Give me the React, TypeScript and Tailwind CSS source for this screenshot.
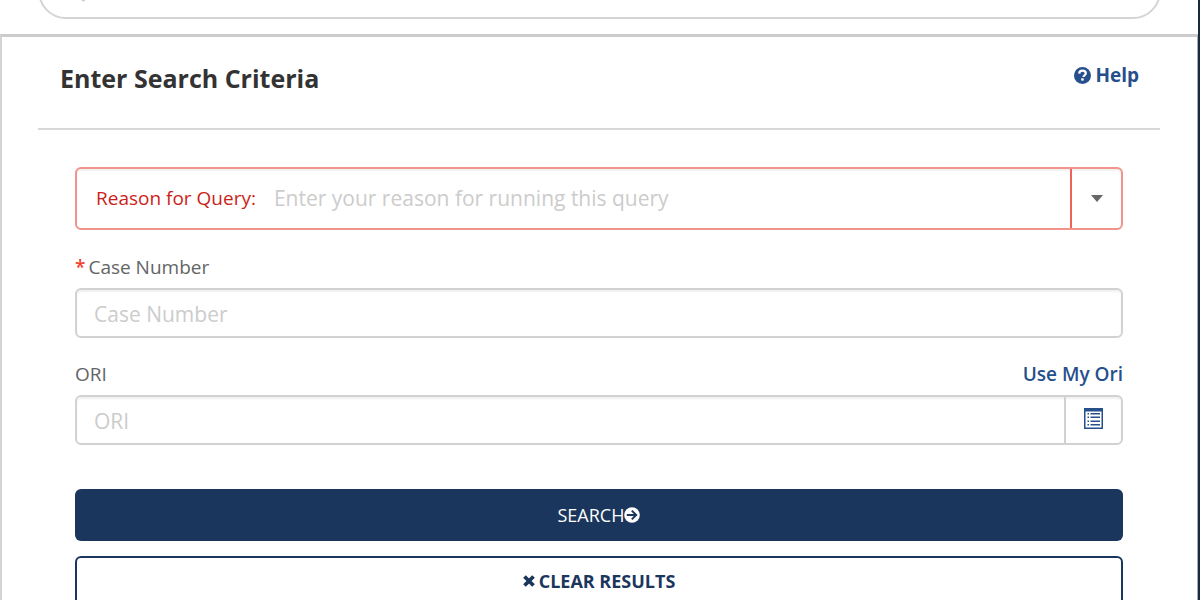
import React from 'react';

function SearchIcon() {
  return (
    <svg viewBox="0 0 20 20" className="size-[26px]" fill="none" stroke="#cccccc" strokeWidth="3" strokeLinecap="round" aria-hidden="true">
      <circle cx="8" cy="8" r="6" />
      <path d="M12.5 12.5 18 18" />
    </svg>
  );
}

function HelpIcon() {
  return (
    <svg viewBox="0 0 17 17" className="size-[17px]" aria-hidden="true">
      <circle cx="8.5" cy="8.5" r="8.5" fill="#26508b" />
      <path d="M5.2 6.6C5.3 4.6 6.600 3.600 8.500 3.600c2 0 3.300 1 3.300 2.600 0 2-2.300 2.100-2.300 3.900" fill="none" stroke="#fff" strokeWidth="2.200" />
      <rect x="7.200" y="11.300" width="2.500" height="2.300" fill="#fff" />
    </svg>
  );
}

function ListIcon() {
  return (
    <svg viewBox="0 0 19 21" className="h-[21px] w-[19px]" fill="#26508b" aria-hidden="true">
      <path fillRule="evenodd" d="M0 0H19V21H0ZM1.500 3.500V19.500H17.500V3.500Z" />
      <path d="M3.500 5h1.500v1.500H3.500zM3.500 8.500h1.500v1.500H3.500zM3.500 12.500h1.500v1.500H3.500zM3.500 16h1.500v1.500H3.500zM6.500 5H16v1.500H6.500zM6.500 8.500H16v1.500H6.500zM6.500 12.500H16v1.500H6.500zM6.500 16H16v1.500H6.500z" />
    </svg>
  );
}

function ArrowCircleIcon() {
  return (
    <svg viewBox="0 0 16 16" className="size-4" aria-hidden="true">
      <circle cx="8" cy="8" r="7.800" fill="#fff" />
      <path d="M2.800 8H12M7.800 3.600 12.200 8l-4.400 4.400" fill="none" stroke="#1b365d" strokeWidth="2" />
    </svg>
  );
}

function CrossIcon() {
  return (
    <svg viewBox="0 0 12 12" className="size-3" aria-hidden="true">
      <path d="M1.500 1.500 10.500 10.500M10.500 1.500 1.500 10.500" stroke="#1b365d" strokeWidth="3.800" />
    </svg>
  );
}

const inputClass =
  'h-[46px] w-full min-w-0 px-[17px] pt-0.5 text-[21px] text-[#333333] outline-none placeholder:text-[#cccccc]';

export default function App() {
  return (
    <div className="flex h-screen overflow-hidden bg-white font-['Open_Sans','Noto_Sans',sans-serif] text-[#636466]">
      <div className="flex min-w-0 flex-1 flex-col">
        <header className="flex h-[34px] shrink-0 items-end overflow-hidden pr-[37px] pb-[15px] pl-[38px]">
          <div className="flex h-[60px] flex-1 shrink-0 items-center rounded-[28px] border-2 border-[#d4d4d4] pl-5">
            <SearchIcon />
            <input type="search" aria-label="Search" className="ml-2 min-w-0 flex-1 outline-none" />
          </div>
        </header>

        <main className="flex-1 border-t-3 border-r border-l-2 border-t-[#cccccc] border-r-[#a9adb2] border-l-[#d4d4d4] pr-[37px] pl-9">
          <div className="flex h-[93px] items-start justify-between border-b-2 border-[#d8d8d8] pr-[21px] pl-[22px]">
            <h1 className="pt-[23px] text-[25px] leading-9 font-bold text-[#333333]">Enter Search Criteria</h1>
            <a href="#help" className="flex items-center gap-1 pt-6 text-[19px] leading-7 font-bold text-[#26508b]">
              <HelpIcon />
              Help
            </a>
          </div>

          <form className="px-[37px] pt-[37px]" onSubmit={(event) => event.preventDefault()}>
            <div className="flex h-[63px] rounded-md border-2 border-[#f0948c] shadow-[inset_0_2px_2px_rgba(0,0,0,0.06)]">
              <label htmlFor="reason" className="flex shrink-0 items-center pl-[19px] text-[19px] text-[#cb1f1b]">
                Reason for Query:
              </label>
              <input
                id="reason"
                type="text"
                placeholder="Enter your reason for running this query"
                className="min-w-0 flex-1 px-[18px] text-[21px] text-[#333333] outline-none placeholder:text-[#cccccc]"
              />
              <button type="button" aria-label="Show reasons" className="flex w-[51px] items-center justify-center border-l-2 border-[#f06257]">
                <svg viewBox="0 0 12 7" className="h-[7px] w-3" aria-hidden="true">
                  <path d="M0 0h12L6 7z" fill="#666666" />
                </svg>
              </button>
            </div>

            <label htmlFor="case-number" className="mt-6 mb-[7px] flex h-[27px] items-center text-[19px]">
              <span className="mr-[3px] font-semibold text-[#f33f2e]">*</span>Case Number
            </label>
            <div className="flex h-[50px] items-center rounded-md border-2 border-[#d2d2d2] shadow-[inset_0_2px_2px_rgba(0,0,0,0.06)]">
              <input id="case-number" type="text" placeholder="Case Number" className={inputClass} />
            </div>

            <div className="mt-[23px] mb-[7px] flex h-[27px] items-center justify-between text-[19px]">
              <label htmlFor="ori">ORI</label>
              <a href="#ori" className="font-semibold text-[#26508b]">
                Use My Ori
              </a>
            </div>
            <div className="flex h-[50px] items-center rounded-md border-2 border-[#d2d2d2] shadow-[inset_0_2px_2px_rgba(0,0,0,0.06)]">
              <input id="ori" type="text" placeholder="ORI" className={inputClass} />
              <button type="button" aria-label="Choose an ORI" className="flex w-[57px] shrink-0 items-center justify-center self-stretch border-l-2 border-[#d2d2d2] pb-[3px]">
                <ListIcon />
              </button>
            </div>

            <button type="submit" className="mt-11 flex h-[52px] w-full items-center justify-center rounded-md bg-[#1b365d] text-[18px] text-white">
              SEARCH
              <ArrowCircleIcon />
            </button>
            <button type="reset" className="mt-[15px] flex h-[52px] w-full items-center justify-center gap-1 rounded-md border-2 border-[#1b365d] pb-0.5 text-[18px] font-bold text-[#1b365d]">
              <CrossIcon />
              CLEAR RESULTS
            </button>
          </form>
        </main>
      </div>
      <div className="w-0.5 shrink-0 bg-[#1b2a3a]" />
    </div>
  );
}
